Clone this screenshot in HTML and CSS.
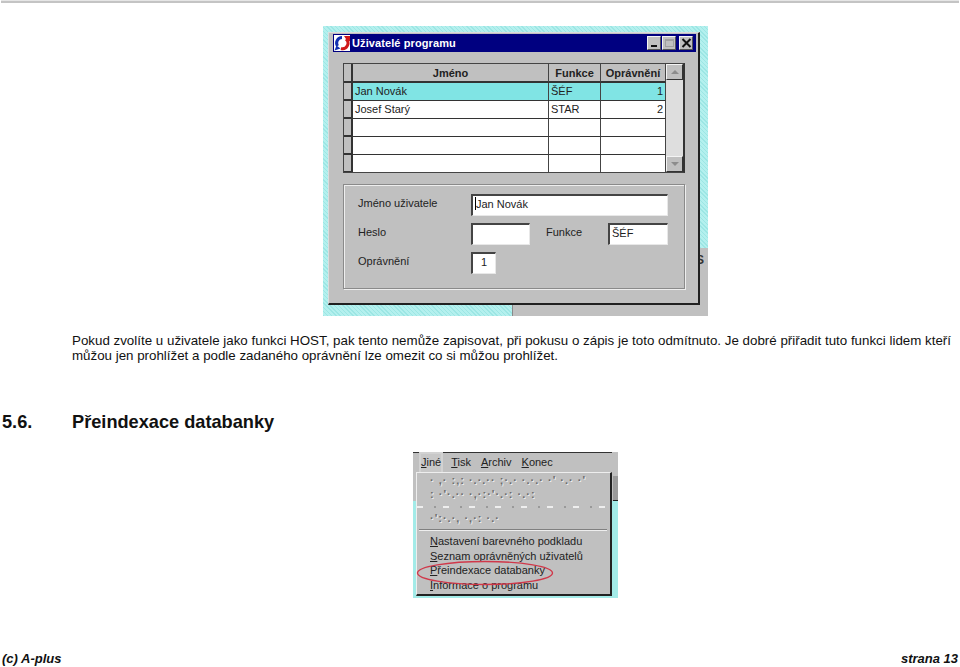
FILE: index.html
```html
<!DOCTYPE html>
<html lang="cs">

<head>
    <meta charset="UTF-8">
    <meta name="viewport" content="width=device-width, initial-scale=1.0">
    <title>Přeindexace databanky</title>
    <link rel="stylesheet" href="styles.css">
</head>

<body>

    <div class="top-rule"></div>

    <div class="shot-row shot-row-users">
        <div class="shot-users">
            <div class="back-panel"><span class="back-letter">S</span></div>
            <div class="window">
                <div class="titlebar">
                    <svg class="app-icon" width="18" height="18" viewBox="0 0 18 18">
                        <rect x="1" y="1" width="16" height="16" fill="#fff" />
                        <path d="M9 3.5A5.5 5.5 0 0 0 4.5 12" stroke="#1030b0" stroke-width="3" fill="none" />
                        <path d="M1.5 16.5l2-5 4 3z" fill="#1030b0" />
                        <path d="M8 14.5A5.5 5.5 0 0 0 13 5" stroke="#d01818" stroke-width="3" fill="none" />
                        <path d="M11 2h6v5l-2 1z" fill="#d01818" />
                    </svg>
                    <span class="title-text">Uživatelé programu</span>
                    <div class="title-buttons">
                        <span class="tbtn"><span class="tbtn-min"></span></span>
                        <span class="tbtn tbtn-off"><span class="tbtn-max"></span></span>
                        <span class="tbtn tbtn-close">
                            <svg width="11" height="10" viewBox="0 0 11 10">
                                <path d="M1.5 1l8 8M9.5 1l-8 8" stroke="#111" stroke-width="2" fill="none" />
                            </svg>
                        </span>
                    </div>
                </div>

                <div class="grid-wrap">
                    <div class="users-grid">
                        <div class="marker"></div>
                        <div class="cell head">Jméno</div>
                        <div class="cell head">Funkce</div>
                        <div class="cell head">Oprávnění</div>

                        <div class="marker"></div>
                        <div class="cell sel">Jan Novák</div>
                        <div class="cell sel">ŠÉF</div>
                        <div class="cell sel num">1</div>

                        <div class="marker"></div>
                        <div class="cell">Josef Starý</div>
                        <div class="cell">STAR</div>
                        <div class="cell num">2</div>

                        <div class="marker"></div>
                        <div class="cell"></div>
                        <div class="cell"></div>
                        <div class="cell"></div>

                        <div class="marker"></div>
                        <div class="cell"></div>
                        <div class="cell"></div>
                        <div class="cell"></div>

                        <div class="marker"></div>
                        <div class="cell"></div>
                        <div class="cell"></div>
                        <div class="cell"></div>
                    </div>
                    <div class="scrollbar">
                        <span class="sb-btn"><span class="arrow-up"></span></span>
                        <span class="sb-track"></span>
                        <span class="sb-btn"><span class="arrow-down"></span></span>
                    </div>
                </div>

                <div class="group-box">
                    <div class="form-row">
                        <span class="form-label">Jméno uživatele</span>
                        <span class="field field-name"><span class="caret"></span>Jan Novák</span>
                    </div>
                    <div class="form-row">
                        <span class="form-label">Heslo</span>
                        <span class="field field-pass"></span>
                        <span class="form-label-mid">Funkce</span>
                        <span class="field field-func">ŠÉF</span>
                    </div>
                    <div class="form-row">
                        <span class="form-label">Oprávnění</span>
                        <span class="field field-perm">1</span>
                    </div>
                </div>
            </div>
        </div>
    </div>

    <p class="para">Pokud zvolíte u uživatele jako funkci HOST, pak tento nemůže zapisovat, při pokusu o zápis je toto odmítnuto. Je dobré přiřadit tuto funkci lidem kteří můžou jen prohlížet a podle zadaného oprávnění lze omezit co si můžou prohlížet.</p>

    <h2 class="section-title"><span class="section-num">5.6.</span>Přeindexace databanky</h2>

    <div class="shot-row">
        <div class="shot-menu">
            <div class="menubar">
                <span class="menu-item menu-open"><u>J</u>iné</span>
                <span class="menu-item"><u>T</u>isk</span>
                <span class="menu-item"><u>A</u>rchiv</span>
                <span class="menu-item"><u>K</u>onec</span>
            </div>
            <div class="dropdown">
                <div class="drop-dim">· ,· :‚: ·.·.·· ;·.· ·.·.· ·' ·.· ·'</div>
                <div class="drop-dim">: ·'·.·· ·,·:·'·.·: ·.·:</div>
                <div class="drop-speck"></div>
                <div class="drop-dim drop-dim-gap">·':·.·, ·,·: ·.·</div>
                <div class="drop-sep"></div>
                <div class="drop-item"><u>N</u>astavení barevného podkladu</div>
                <div class="drop-item"><u>S</u>eznam oprávněných uživatelů</div>
                <div class="drop-item"><u>P</u>řeindexace databanky</div>
                <div class="drop-item"><u>I</u>nformace o programu</div>
                <svg class="red-ring" width="140" height="26" viewBox="0 0 140 26">
                    <ellipse cx="69" cy="13" rx="67.5" ry="11.5" fill="none" stroke="#d0384a" stroke-width="1.4" />
                </svg>
            </div>
        </div>
    </div>

    <div class="footer">
        <span>(c) A-plus</span>
        <span>strana 13</span>
    </div>

</body>

</html>
```

FILE: styles.css
```css
html,
body {
    margin: 0;
    padding: 0;
}

body {
    width: 960px;
    height: 667px;
    overflow: hidden;
    background: #fff;
    color: #000;
    font-family: "Liberation Sans", Arial, sans-serif;
}

.top-rule {
    height: 2px;
    margin: 0 1px;
    background: #c4c4c4;
    border-top: 1px solid #e6e6e6;
}

.shot-row {
    display: flex;
    justify-content: center;
    padding-left: 71px;
}

.shot-row-users {
    margin-top: 23px;
}

/* first screenshot */
.shot-users {
    position: relative;
    width: 385px;
    height: 290px;
    padding: 6px 8px 11px 5px;
    box-sizing: border-box;
    background-color: #a8ecea;
    background-image: repeating-linear-gradient(45deg, #9ce6e4 0 1px, #b4f0ee 1px 3px);
}

.back-panel {
    position: absolute;
    left: 189px;
    top: 222px;
    width: 196px;
    height: 68px;
    background: #c0c0c0;
    border-left: 1px solid #8a8a8a;
    box-sizing: border-box;
}

.back-letter {
    position: absolute;
    right: 4px;
    top: 5px;
    font-size: 12px;
    font-weight: bold;
    color: #333;
}

.window {
    position: relative;
    height: 273px;
    background: #c0c0c0;
    border-right: 2px solid #202020;
    border-bottom: 2px solid #202020;
    border-top: 1px solid #dcdcdc;
    border-left: 1px solid #dcdcdc;
    box-sizing: border-box;
    padding: 1px 2px 0 4px;
}

.titlebar {
    display: flex;
    align-items: center;
    height: 18px;
    padding-right: 3px;
    background: #000080;
    color: #fff;
}

.app-icon {
    flex: none;
    margin-right: 1px;
}

.title-text {
    font-size: 11px;
    font-weight: bold;
    letter-spacing: 0.1px;
}

.title-buttons {
    display: flex;
    gap: 1px;
    margin-left: auto;
}

.tbtn {
    display: flex;
    align-items: center;
    justify-content: center;
    width: 14px;
    height: 14px;
    background: #c0c0c0;
    border-top: 1px solid #f4f4f4;
    border-left: 1px solid #f4f4f4;
    border-right: 1px solid #555;
    border-bottom: 1px solid #555;
    box-sizing: border-box;
}

.tbtn-min {
    width: 6px;
    height: 2px;
    margin-top: 6px;
    background: #111;
}

.tbtn-max {
    width: 9px;
    height: 8px;
    border: 1px solid #a0a0a0;
    border-top-width: 2px;
    box-sizing: border-box;
}

.tbtn-close {
    margin-left: 2px;
}

.grid-wrap {
    display: flex;
    margin: 11px 0 0 10px;
    width: 342px;
    height: 110px;
    border: 1px solid #444;
    border-right: 2px solid #333;
    box-sizing: border-box;
}

.users-grid {
    display: grid;
    flex: none;
    grid-template-columns: 9px 196px 52px 65px;
    grid-template-rows: 19px repeat(5, 18px);
    width: 322px;
    background: #fff;
    overflow: hidden;
}

.marker {
    background: #c0c0c0;
    border-right: 2px solid #333;
    border-bottom: 2px solid #333;
    box-sizing: border-box;
}

.cell {
    padding: 0 2px;
    border-right: 1px solid #444;
    border-bottom: 1px solid #333;
    box-sizing: border-box;
    font-size: 11px;
    line-height: 16px;
    color: #222;
    white-space: nowrap;
}

.head {
    background: #c0c0c0;
    border-bottom: 2px solid #333;
    font-weight: bold;
    text-align: center;
    line-height: 19px;
    padding: 0;
}

.sel {
    background: #80e4e4;
}

.num {
    text-align: right;
}

.scrollbar {
    display: flex;
    flex-direction: column;
    flex: 1;
    background: #dedede;
}

.sb-btn {
    display: flex;
    align-items: center;
    justify-content: center;
    height: 16px;
    background: #c0c0c0;
    border-top: 1px solid #f4f4f4;
    border-left: 1px solid #f4f4f4;
    border-right: 1px solid #333;
    border-bottom: 1px solid #333;
    box-sizing: border-box;
}

.sb-track {
    flex: 1;
}

.arrow-up {
    border-left: 4px solid transparent;
    border-right: 4px solid transparent;
    border-bottom: 4px solid #8c8c8c;
}

.arrow-down {
    border-left: 4px solid transparent;
    border-right: 4px solid transparent;
    border-top: 4px solid #8c8c8c;
}

.group-box {
    display: flex;
    flex-direction: column;
    gap: 7px;
    width: 342px;
    height: 105px;
    margin: 11px 0 0 10px;
    padding: 9px 0 0 14px;
    border: 1px solid #8a8a8a;
    box-shadow: 1px 1px 0 #eee, inset 1px 1px 0 #eee;
    box-sizing: border-box;
}

.form-row {
    display: flex;
    align-items: center;
    height: 22px;
    font-size: 11px;
    color: #222;
}

.form-label {
    width: 113px;
    flex: none;
    padding-bottom: 5px;
}

.form-label-mid {
    width: 78px;
    flex: none;
    padding: 0 0 5px 16px;
    box-sizing: border-box;
}

.field {
    display: block;
    height: 22px;
    background: #fff;
    border-top: 2px solid #444;
    border-left: 2px solid #444;
    border-right: 1px solid #e8e8e8;
    border-bottom: 1px solid #e8e8e8;
    box-sizing: border-box;
    padding: 0 2px;
    line-height: 16px;
}

.field-name {
    width: 197px;
}

.field-pass {
    width: 59px;
}

.field-func {
    width: 60px;
}

.field-perm {
    width: 25px;
    text-align: center;
}

.caret {
    display: inline-block;
    width: 1px;
    height: 13px;
    background: #000;
    vertical-align: -2px;
}

/* text */
.para {
    width: 879px;
    margin: 17px 0 0 72px;
    font-size: 13.33px;
    line-height: 15px;
    text-align: justify;
    color: #111;
}

.section-title {
    display: flex;
    margin: 48px 0 0 2px;
    font-size: 18.2px;
    line-height: 22px;
    font-weight: bold;
    color: #111;
}

.section-num {
    width: 70px;
}

/* second screenshot */
.shot-menu {
    position: relative;
    width: 205px;
    height: 146px;
    margin-top: 19px;
    padding-right: 6px;
    box-sizing: border-box;
    background: linear-gradient(#c0c0c0 0 49px, #a3ebe8 49px);
    font-size: 11px;
    color: #222;
}

/* toolbar piece showing to the right of the open menu */
.shot-menu::after {
    content: "";
    position: absolute;
    right: 0;
    top: 24px;
    width: 5px;
    height: 24px;
    background: #9a9a9a;
    border-bottom: 1px solid #222;
}

.menubar {
    display: flex;
    gap: 10px;
    height: 20px;
    padding: 1px 0 0 8px;
    box-sizing: border-box;
    border-top: 1px solid #333;
    line-height: 17px;
}

.menu-item u {
    text-underline-offset: 1px;
}

.menu-open {
    box-shadow: 0 0 0 2px #d2d2d2;
    background: #c8c8c8;
}

.dropdown {
    position: relative;
    width: 196px;
    height: 124px;
    margin-left: 3px;
    padding: 0 0 0 13px;
    background: #c0c0c0;
    border-top: 1px solid #eee;
    border-left: 1px solid #eee;
    border-right: 2px solid #222;
    border-bottom: 2px solid #222;
    box-sizing: border-box;
}

.drop-dim {
    height: 14px;
    line-height: 14px;
    font-size: 11px;
    font-weight: bold;
    letter-spacing: 1px;
    color: #6c6c6c;
    white-space: nowrap;
    text-shadow: 1px 1px 0 #eee;
}

.drop-dim-gap {
    margin-top: 3px;
}

.drop-speck {
    height: 2px;
    margin: 5px 0 0 -13px;
    background: repeating-linear-gradient(90deg, #eee 0 6px, #c0c0c0 6px 17px, #999 17px 19px, #c0c0c0 19px 26px);
}

.drop-sep {
    height: 1px;
    margin: 4px 3px 3px -11px;
    background: #808080;
    border-bottom: 1px solid #eee;
}

.drop-item {
    height: 14.5px;
    line-height: 14.5px;
    white-space: nowrap;
}

.red-ring {
    position: absolute;
    left: -1px;
    top: 87px;
}

.footer {
    display: flex;
    justify-content: space-between;
    margin-top: 53px;
    padding: 0 2px;
    font-size: 13px;
    line-height: 16px;
    font-weight: bold;
    font-style: italic;
    color: #111;
}
```
